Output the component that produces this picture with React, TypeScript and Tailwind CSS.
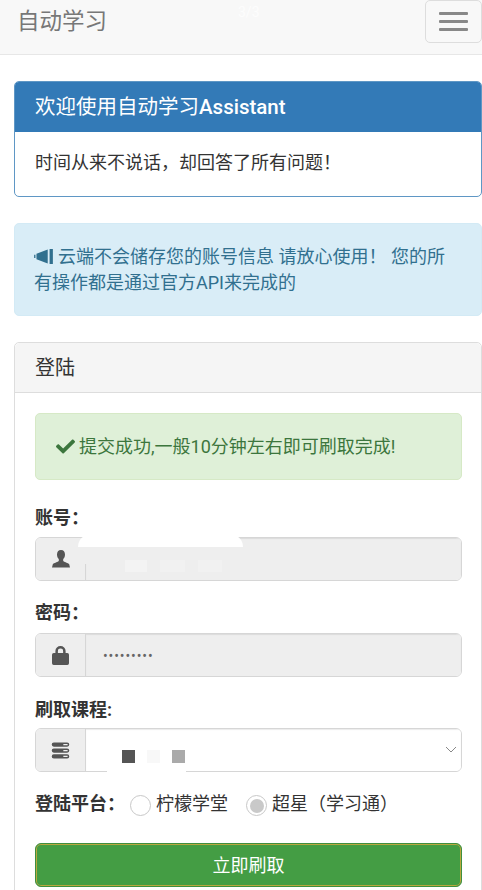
import { FaCheck } from 'react-icons/fa';

const font = { fontFamily: '"Roboto", "Noto Sans CJK SC", sans-serif' };

function UserIcon() {
  return (
    <svg viewBox="0 0 20 20" className="h-[20px] w-[20px] fill-[#555555]">
      <path d="M10 1C7.300 1 6 3 6 5.500c0 1.900.7 3.600 1.800 4.600v1.800c-.5.9-5.100 2-6 3.300L1 18.500h18l-.8-3.300c-.9-1.300-5.500-2.400-6-3.300v-1.800C13.300 9.100 14 7.400 14 5.500 14 3 12.700 1 10 1z" />
    </svg>
  );
}

function LockIcon() {
  return (
    <svg viewBox="2.500 1.500 15 17.500" preserveAspectRatio="none" className="h-[19px] w-[17px] fill-[#555555]">
      <path fillRule="evenodd" d="M5.500 8V6a4.500 4.500 0 0 1 9 0v2H16a1.500 1.500 0 0 1 1.500 1.500v8A1.500 1.500 0 0 1 16 19H4a1.500 1.500 0 0 1-1.500-1.500v-8A1.500 1.500 0 0 1 4 8zm2.200 0h4.600V6a2.300 2.300 0 0 0-4.600 0z" />
    </svg>
  );
}

function ServerIcon() {
  return (
    <svg viewBox="0 0 20 20" className="h-[19px] w-[19px] fill-[#555555]">
      <path fillRule="evenodd" d="M3 1.500h14a2 2 0 0 1 0 4.500H3a2 2 0 0 1 0-4.500zm10 1.600v1.300h4.500V3.100zM3 7.800h14a2 2 0 0 1 0 4.500H3a2 2 0 0 1 0-4.500zm10 1.600v1.300h4.500V9.400zM3 14h14a2 2 0 0 1 0 4.500H3A2 2 0 0 1 3 14zm10 1.600v1.300h4.500v-1.300z" />
    </svg>
  );
}

function BullhornIcon() {
  return (
    <svg viewBox="0 0 20 16" className="-mt-[3px] mr-[5px] inline-block h-[15px] w-[19px] fill-[#31708f]">
      <path d="M0 6h1.400v3.500H0zM2.500 5l12-4.500v15l-12-4.500zM16.500 0H20v16h-3.500z" />
    </svg>
  );
}

function InputGroup({ icon, bg, children }: { icon: React.ReactNode; bg: string; children?: React.ReactNode }) {
  return (
    <div className="flex h-[44px] overflow-hidden rounded-[6px] border border-[#d6d6d6]">
      <span className="flex w-[50px] shrink-0 items-center justify-center border-r border-[#d6d6d6] bg-[#eeeeee]">{icon}</span>
      <div className={`flex-1 shadow-[inset_0_1px_1px_rgba(0,0,0,0.08)] ${bg}`}>{children}</div>
    </div>
  );
}

function Radio({ checked }: { checked?: boolean }) {
  return (
    <span className="flex h-[21px] w-[21px] items-center justify-center rounded-full border border-[#c8c8c8] bg-white">
      {checked && <span className="h-[14px] w-[14px] rounded-full bg-[#c9c9c9]" />}
    </span>
  );
}

export default function App() {
  return (
    <div className="relative h-[890px] w-[482px] overflow-hidden bg-white text-[18px] text-[#333333]" style={font}>
      <nav className="relative flex h-[55px] items-start justify-between border-b border-[#e7e7e7] bg-[#f8f8f8] pl-[17px]">
        <span className="mt-[3px] text-[22.500px] leading-[36px] text-[#777777]">自动学习</span>
        <span className="absolute left-[238px] top-[3px] text-[14px] leading-[18px] text-[#fdfdfd]">3/3</span>
        <button className="flex h-[43px] w-[57px] flex-col items-center justify-center gap-[5px] rounded-[5px] border border-[#dddddd]">
          <span className="h-[3px] w-[29px] rounded-[1px] bg-[#888888]" />
          <span className="h-[3px] w-[29px] rounded-[1px] bg-[#888888]" />
          <span className="h-[3px] w-[29px] rounded-[1px] bg-[#888888]" />
        </button>
      </nav>

      <section className="ml-[14px] mt-[26px] h-[116px] overflow-hidden rounded-[5px] border border-[#5f97c5]">
        <div className="flex h-[50px] items-center bg-[#337ab7] px-[20px] text-[20.500px] text-white">
          欢迎使用自动学习<span className="font-medium">Assistant</span>
        </div>
        <div className="px-[20px] pt-[18px] leading-[26px]">{'时间从来不说话\uFF0C却回答了所有问题\uFF01'}</div>
      </section>

      <div className="ml-[14px] mt-[26px] h-[93px] rounded-[5px] border border-[#d3eaf5] bg-[#d9edf7] pl-[19px] pr-[24px] pt-[20px] leading-[26px] text-[#31708f]">
        <BullhornIcon />{'云端不会储存您的账号信息 请放心使用\uFF01 您的所有操作都是通过官方API来完成的'}
      </div>

      <section className="ml-[14px] mt-[26px] h-[600px] rounded-[5px] border border-[#dddddd]">
        <div className="flex h-[50px] items-center rounded-t-[5px] border-b border-[#dddddd] bg-[#f5f5f5] px-[20px] text-[20px]">登陆</div>
        <div className="pl-[20px] pr-[19px] pt-[20px]">
          <div className="flex h-[67px] items-center gap-[4px] rounded-[5px] border border-[#d6e9c6] bg-[#dff0d8] px-[20px] text-[#3c763d]">
            <FaCheck className="h-[19px] w-[19px]" />
            <span>提交成功,一般10分钟左右即可刷取完成!</span>
          </div>

          <label className="mt-[25px] block font-bold leading-[26px]">{'账号\uFF1A'}</label>
          <div className="mt-[6px]">
            <InputGroup icon={<UserIcon />} bg="bg-[#eeeeee]" />
          </div>

          <label className="mt-[19px] block font-bold leading-[26px]">{'密码\uFF1A'}</label>
          <div className="mt-[7px]">
            <InputGroup icon={<LockIcon />} bg="bg-[#eeeeee]">
              <span className="block pl-[17px] pt-[7px] text-[14px] leading-[30px] tracking-[0.9px] text-[#666666]">•••••••••</span>
            </InputGroup>
          </div>

          <label className="mt-[20px] block font-bold leading-[26px]">刷取课程:</label>
          <div className="mt-[5px]">
            <InputGroup icon={<ServerIcon />} bg="bg-white">
              <div className="flex h-full items-center justify-end pr-[4px]">
                <svg viewBox="0 0 12 8" className="h-[8px] w-[12px] fill-none stroke-[#888888]">
                  <path d="M1 1l5 5 5-5" />
                </svg>
              </div>
            </InputGroup>
          </div>

          <div className="mt-[16px] flex h-[30px] items-center">
            <span className="font-bold">{'登陆平台\uFF1A'}</span>
            <span className="ml-[5px] mt-[5px]"><Radio /></span>
            <span className="ml-[5px]">柠檬学堂</span>
            <span className="ml-[18px] mt-[5px]"><Radio checked /></span>
            <span className="ml-[5px]">{'超星\uFF08学习通\uFF09'}</span>
          </div>

          <button className="mt-[25px] h-[44px] w-full rounded-[6px] border border-[#3f8f3f] bg-[#449d44] text-white shadow-[inset_0_0_0_1px_#b9a83f]">立即刷取</button>
        </div>
      </section>

      {/* redaction marks over the account and course fields */}
      <div className="absolute left-[78px] top-[534px] h-[13px] w-[165px] rounded-t-[14px] bg-white" />
      <div className="absolute left-[85px] top-[547px] h-[17px] w-[3px] bg-[#eeeeee]" />
      <div className="absolute left-[138px] top-[581px] h-[5px] w-[60px] rounded-b-[14px] bg-white" />
      <div className="absolute left-[125px] top-[560px] h-[12px] w-[22px] bg-[#f3f3f3]" />
      <div className="absolute left-[160px] top-[560px] h-[12px] w-[25px] bg-[#f1f1f1]" />
      <div className="absolute left-[198px] top-[560px] h-[12px] w-[24px] bg-[#f1f1f1]" />
      <div className="absolute left-[107px] top-[770px] h-[4px] w-[79px] bg-white" />
      <div className="absolute left-[122px] top-[750px] h-[13px] w-[13px] bg-[#555555]" />
      <div className="absolute left-[147px] top-[750px] h-[13px] w-[13px] bg-[#f8f8f8]" />
      <div className="absolute left-[172px] top-[750px] h-[13px] w-[13px] bg-[#aaaaaa]" />
    </div>
  );
}
